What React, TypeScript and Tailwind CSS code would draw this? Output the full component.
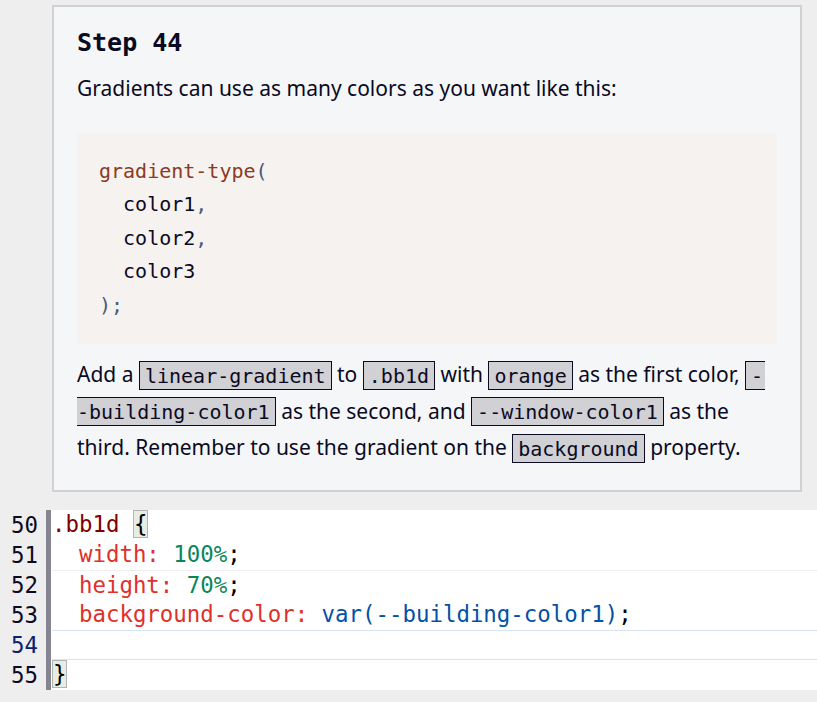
import React from "react";

const mono = "font-['DejaVu_Sans_Mono','Liberation_Mono',monospace]";
const sans = "font-['Noto_Sans','Open_Sans',sans-serif]";

function Code({ children }: { children: React.ReactNode }) {
  return (
    <code
      className={`${mono} text-[20px] bg-[#d0d0d5] border border-[#0a0a23] px-[5px] py-[1.5px] text-[#0a0a23]`}
    >
      {children}
    </code>
  );
}

type Tok = { t: string; c: string };

const lines: { n: number; toks: Tok[]; bracket?: string }[] = [
  { n: 50, toks: [{ t: ".bb1d ", c: "text-[#800000]" }], bracket: "{" },
  {
    n: 51,
    toks: [
      { t: "  width: ", c: "text-[#e0302b]" },
      { t: "100%", c: "text-[#098658]" },
      { t: ";", c: "text-black" },
    ],
  },
  {
    n: 52,
    toks: [
      { t: "  height: ", c: "text-[#e0302b]" },
      { t: "70%", c: "text-[#098658]" },
      { t: ";", c: "text-black" },
    ],
  },
  {
    n: 53,
    toks: [
      { t: "  background-color: ", c: "text-[#e0302b]" },
      { t: "var(--building-color1)", c: "text-[#0451a5]" },
      { t: ";", c: "text-black" },
    ],
  },
  { n: 54, toks: [] },
  { n: 55, toks: [], bracket: "}" },
];

export default function App() {
  return (
    <div className="w-[817px] h-[702px] bg-[#eeeeee] overflow-hidden">
      {/* instructions panel */}
      <div className="pt-[5px] pl-[52px]">
        <div className="w-[750px] border-2 border-[#d0d0d5] bg-[#f5f6f7] px-[23px] pt-[21px] pb-[23px] text-[#0a0a23]">
          <h2 className={`${mono} font-bold text-[25px] leading-[30px] mb-[13px]`}>
            Step 44
          </h2>
          <p className={`${sans} text-[21px] leading-[35.5px]`}>
            Gradients can use as many colors as you want like this:
          </p>

          <pre
            className={`${mono} mt-[26px] bg-[#f5f2f0] px-[22px] py-[22px] text-[20px] leading-[33.5px] text-[#0a0a23]`}
          >
            <span className="text-[#8c3a1c]">gradient-type</span>
            <span className="text-[#4a5a78]">(</span>
            {"\n  color1"}
            <span className="text-[#4a5a78]">,</span>
            {"\n  color2"}
            <span className="text-[#4a5a78]">,</span>
            {"\n  color3\n"}
            <span className="text-[#4a5a78]">);</span>
          </pre>

          <p className={`${sans} mt-[13px] text-[21px] leading-[35.5px]`}>
            Add a <Code>linear-gradient</Code> to <Code>.bb1d</Code> with{" "}
            <Code>orange</Code> as the first color,{" "}
            <code
              className={`${mono} text-[20px] bg-[#d0d0d5] border-y border-l border-[#0a0a23] pl-[5px] pr-[2px] py-[1.5px]`}
            >
              -
            </code>
            <br />
            <code
              className={`${mono} text-[20px] bg-[#d0d0d5] border-y border-r border-[#0a0a23] pr-[5px] py-[1.5px]`}
            >
              -building-color1
            </code>{" "}
            as the second, and <Code>--window-color1</Code> as the
            <br />
            third. Remember to use the gradient on the <Code>background</Code>{" "}
            property.
          </p>
        </div>
      </div>

      {/* editor */}
      <div className="mt-[18px] flex h-[180px]">
        <div className={`${mono} w-[46px] pr-[8px] text-right text-[22.4px]`}>
          {lines.map((l) => (
            <div
              key={l.n}
              className={`h-[30px] leading-[30px] ${
                l.n === 54 ? "text-[#0b216f]" : "text-[#0a0a23]"
              }`}
            >
              {l.n}
            </div>
          ))}
        </div>
        <div className="w-[5px] bg-[#858591]" />
        <div className={`${mono} flex-1 bg-white pl-[1px] text-[22.4px]`}>
          {lines.map((l) => (
            <div
              key={l.n}
              className={`h-[30px] leading-[28px] whitespace-pre ${
                l.n === 54
                  ? "border-y border-[#d6e4f0]"
                  : l.n === 52
                  ? "border-t border-[#eeeeee]"
                  : ""
              }`}
            >
              {l.toks.map((t, i) => (
                <span key={i} className={t.c}>
                  {t.t}
                </span>
              ))}
              {l.bracket && (
                <span className="bg-[#e6ede4] border border-[#b4b4b4] text-black">
                  {l.bracket}
                </span>
              )}
            </div>
          ))}
        </div>
      </div>
    </div>
  );
}
